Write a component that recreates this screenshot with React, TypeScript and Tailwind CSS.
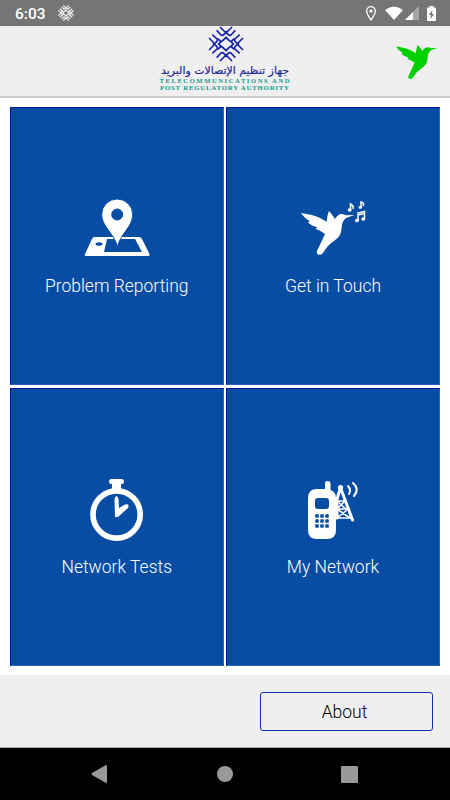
import type { ReactNode } from "react";

// Interlaced emblem: four mirrored outer arms around a diamond with wavy shoulders
function Lattice({ size, color, stroke }: { size: number; color: string; stroke: number }) {
  return (
    <svg width={size} height={size} viewBox="0 0 120 120" fill="none" stroke={color} strokeWidth={stroke}>
      {[0, 90, 180, 270].map((angle) => (
        <g key={angle} transform={`rotate(${angle} 60 60)`}>
          <path d="M42 9 54 21Q60 27 66 21L78 9" />
          <path d="M32 19 45 33Q49 36 53 32L60 25 67 32Q71 36 75 33L88 19" />
        </g>
      ))}
      <path d="M35 44 43 51Q47 54 51 49L60 40 69 49Q73 54 77 51L85 44" />
      <path d="M35 76 43 69Q47 66 51 71L60 80 69 71Q73 66 77 69L85 76" />
      <path d="M46 52 38 60 46 68M74 52 82 60 74 68" />
    </svg>
  );
}

function BirdShape() {
  return (
    <path d="M0 0C9 1 20 4 25.500 9C26 5 26.500 1 28-2C30 0 32 3 34 6C36 3 38 1 40.500 1Q43 1 44.500 2.200L53.500 2 45 5C41 8 41 12 40.500 16C40 22 37 25 33 28C28 31 25 35 22 40C20 43 14.500 42 16 38L24 21C21 19 19 17 14.500 16L16.500 14.500C12 13 8 11 7 9L9 8.500C5 6 2 3 0 0Z" />
  );
}

function StatusBar() {
  return (
    <div className="flex h-[26px] items-center bg-[#757575] pl-[15px] pr-[14px] text-white">
      <span className="w-[42px] pt-[3px] text-[15.5px] font-medium leading-none">6:03</span>
      <Lattice size={18} color="#f2f2f2" stroke={8} />
      <div className="ml-auto flex items-center">
        <svg width="10" height="15" viewBox="0 0 10 15" fill="none" stroke="#fff" strokeWidth="1.3">
          <path d="M5 14C3 11 .7 8 .7 5a4.300 4.300 0 0 1 8.600 0C9.300 8 7 11 5 14Z" />
          <circle cx="5" cy="5" r="1.6" fill="#fff" stroke="none" />
        </svg>
        <svg className="ml-[9px]" width="18" height="14" viewBox="0 0 18 14" fill="#fff">
          <path d="M0 4Q9-3 18 4L9 14Z" />
        </svg>
        <svg className="ml-[2px]" width="14" height="14" viewBox="0 0 14 14">
          <path d="M14 0V14H0Z" fill="#a5a5a5" />
          <path d="M8 6V14H0Z" fill="#fff" />
        </svg>
        <svg className="ml-[8px]" width="9" height="15" viewBox="0 0 9 15">
          <path d="M2.500 0h4v1.500H8q1 0 1 1V14q0 1-1 1H1q-1 0-1-1V2.500q0-1 1-1h1.500Z" fill="#fff" />
          <path d="M5.500 4 1.800 9H4L3.500 13 7.200 8H5Z" fill="#757575" />
        </svg>
      </div>
    </div>
  );
}

function Header() {
  return (
    <header className="relative h-[72px] border-b-2 border-[#cbcbcb] bg-[#efefef]">
      <div className="flex justify-center">
        <svg className="overflow-visible" width="134" height="69" viewBox="158 26 134 69">
          <g transform="translate(206 24)">
            <Lattice size={40} color="#1420a8" stroke={5} />
          </g>
          <text
            x="289"
            y="73.5"
            textLength="128"
            lengthAdjust="spacingAndGlyphs"
            direction="rtl"
            fontSize="10.5"
            fill="#1c2897"
            stroke="#1c2897"
            strokeWidth="0.2"
            className="font-['DejaVu_Sans',sans-serif]"
          >
            جهاز تنظيم الإتصالات والبريد
          </text>
          <g fill="#109c8c" className="font-['Liberation_Serif',serif] font-bold">
            <text x="159.5" y="83.3" textLength="130" fontSize="6.6">
              TELECOMMUNICATIONS AND
            </text>
            <text x="160" y="90" textLength="129" fontSize="6.8">
              POST REGULATORY AUTHORITY
            </text>
          </g>
        </svg>
      </div>
      <svg className="absolute right-[12px] top-[18px]" width="42" height="36" viewBox="0 -3 54 46" fill="#00d000">
        <BirdShape />
      </svg>
    </header>
  );
}

function Tile({ label, children }: { label: string; children: ReactNode }) {
  return (
    <button className="flex flex-col items-center border border-b-[#2b62bb] border-l-[#0018a0] border-r-[#2b62bb] border-t-[#0018a0] bg-[#084da4] pt-[88px]">
      <div className="flex h-[66px] items-center justify-center">{children}</div>
      <span className="mt-[11px] text-[17.5px] font-light leading-[26px] text-white">{label}</span>
    </button>
  );
}

function MapPinIcon() {
  return (
    <svg width="66" height="60" viewBox="0 0 66 60" fill="#fff">
      <path
        fillRule="evenodd"
        d="M10 38H55Q57 38 58 40L65.500 55Q66 57 64 57H2Q0 57 1 55L8 40Q9 38 10 38ZM23 40 20 53H58L51 40ZM11.500 45A3.500 1.800 0 0 0 18.500 45A3.500 1.800 0 0 0 11.500 45Z"
      />
      <path
        fillRule="evenodd"
        stroke="#084da4"
        strokeWidth="1"
        d="M33.500 48C31 35 17.700 28 17.700 15.500A15.500 15.500 0 0 1 48.700 15.500C48.700 28 36 35 33.500 48ZM27.700 15.500A5.500 5.500 0 0 0 38.700 15.500A5.500 5.500 0 0 0 27.700 15.500Z"
      />
    </svg>
  );
}

function SingingBirdIcon() {
  return (
    <svg width="66" height="60" viewBox="300 199 66 60" fill="#fff">
      <g transform="translate(301 213)">
        <BirdShape />
      </g>
      <g fill="none" stroke="#fff" strokeWidth="1.5">
        <path d="M350.500 210V204Q354 206 353 209" />
        <path d="M361 207V202Q365 203 363 206" />
        <path d="M358 220V213L364.500 211.500V218.500M358 215 364.500 213.500" />
      </g>
      <ellipse cx="349.7" cy="210" rx="2" ry="1.7" />
      <ellipse cx="360.3" cy="207.3" rx="1.7" ry="1.5" />
      <ellipse cx="357" cy="220.5" rx="2" ry="1.7" />
      <ellipse cx="363.3" cy="219" rx="2" ry="1.7" />
    </svg>
  );
}

function StopwatchIcon() {
  return (
    <svg width="56" height="64" viewBox="89 478 56 64" fill="#fff">
      <path d="M111 479H122Q124 479 124 481.500T122 484H121V490H112V484H111Q109 484 109 481.500T111 479Z" />
      <circle cx="116.6" cy="514.5" r="23.6" fill="none" stroke="#fff" strokeWidth="5.6" />
      <path d="M114.500 499Q116.500 493 118.500 499L119 508 125 504.500Q130 503 128 508L118 517H115Z" />
    </svg>
  );
}

function PhoneTowerIcon() {
  return (
    <svg width="56" height="64" viewBox="305 478 56 64" fill="#fff">
      <path
        fillRule="evenodd"
        d="M317 489H325V483Q325 481 327.700 481T330.500 483V490Q336 492 336 498V530Q336 539 327 539H317Q308 539 308 530V498Q308 489 317 489ZM318 498Q315 498 315 501V506Q315 509 318 509H326Q329 509 329 506V501Q329 498 326 498Z"
      />
      <g fill="#084da4">
        {[516, 521, 526].map((y) =>
          [317, 322, 327].map((x) => <rect key={`${x}-${y}`} x={x - 1.8} y={y - 1.7} width="3.6" height="3.4" rx="0.8" />)
        )}
      </g>
      <g fill="none" stroke="#fff" strokeWidth="1.6">
        <path d="M340.500 488 337 499V518M341 489 352.500 520" strokeWidth="3" strokeLinecap="round" />
        <path d="M337 501H345M337 501 347 510M345 501 337 509H347M337 509 350 518M347 510 337 518H351" />
        <path d="M348 486Q351.500 490 349 494" strokeLinecap="round" strokeWidth="2" />
        <path d="M353 483Q360 489 354 496" strokeLinecap="round" strokeWidth="2" />
      </g>
      <circle cx="340.5" cy="487.5" r="2.6" />
    </svg>
  );
}

function NavBar() {
  return (
    <nav className="flex h-[52px] items-center justify-between bg-black pl-[91px] pr-[92px]">
      <svg width="16" height="18" viewBox="0 0 16 18" fill="#999">
        <path d="M15 0Q16 0 16 1V17Q16 18 15 18L1 10Q0 9 1 8Z" />
      </svg>
      <span className="ml-[1px] size-[16px] rounded-full bg-[#999]" />
      <span className="size-[17px] rounded-[1px] bg-[#999]" />
    </nav>
  );
}

export default function App() {
  return (
    <div className="flex h-[800px] w-[450px] flex-col bg-white font-['Roboto',sans-serif]">
      <StatusBar />
      <Header />
      <main className="grid h-[577px] grid-cols-[213.5px_214px] grid-rows-[278px_278px] gap-x-[2.5px] gap-y-[3px] px-[10px] pt-[9px]">
        <Tile label="Problem Reporting">
          <MapPinIcon />
        </Tile>
        <Tile label="Get in Touch">
          <SingingBirdIcon />
        </Tile>
        <Tile label="Network Tests">
          <StopwatchIcon />
        </Tile>
        <Tile label="My Network">
          <PhoneTowerIcon />
        </Tile>
      </main>
      <footer className="flex h-[73px] justify-end border-b border-[#aaa] bg-[#efefef] pr-[17px] pt-[17px]">
        <button className="h-[39px] w-[173px] rounded-[3px] border border-[#0a34a8] pt-[2px] pr-[4px] text-[17.5px] font-light text-black">
          About
        </button>
      </footer>
      <NavBar />
    </div>
  );
}
